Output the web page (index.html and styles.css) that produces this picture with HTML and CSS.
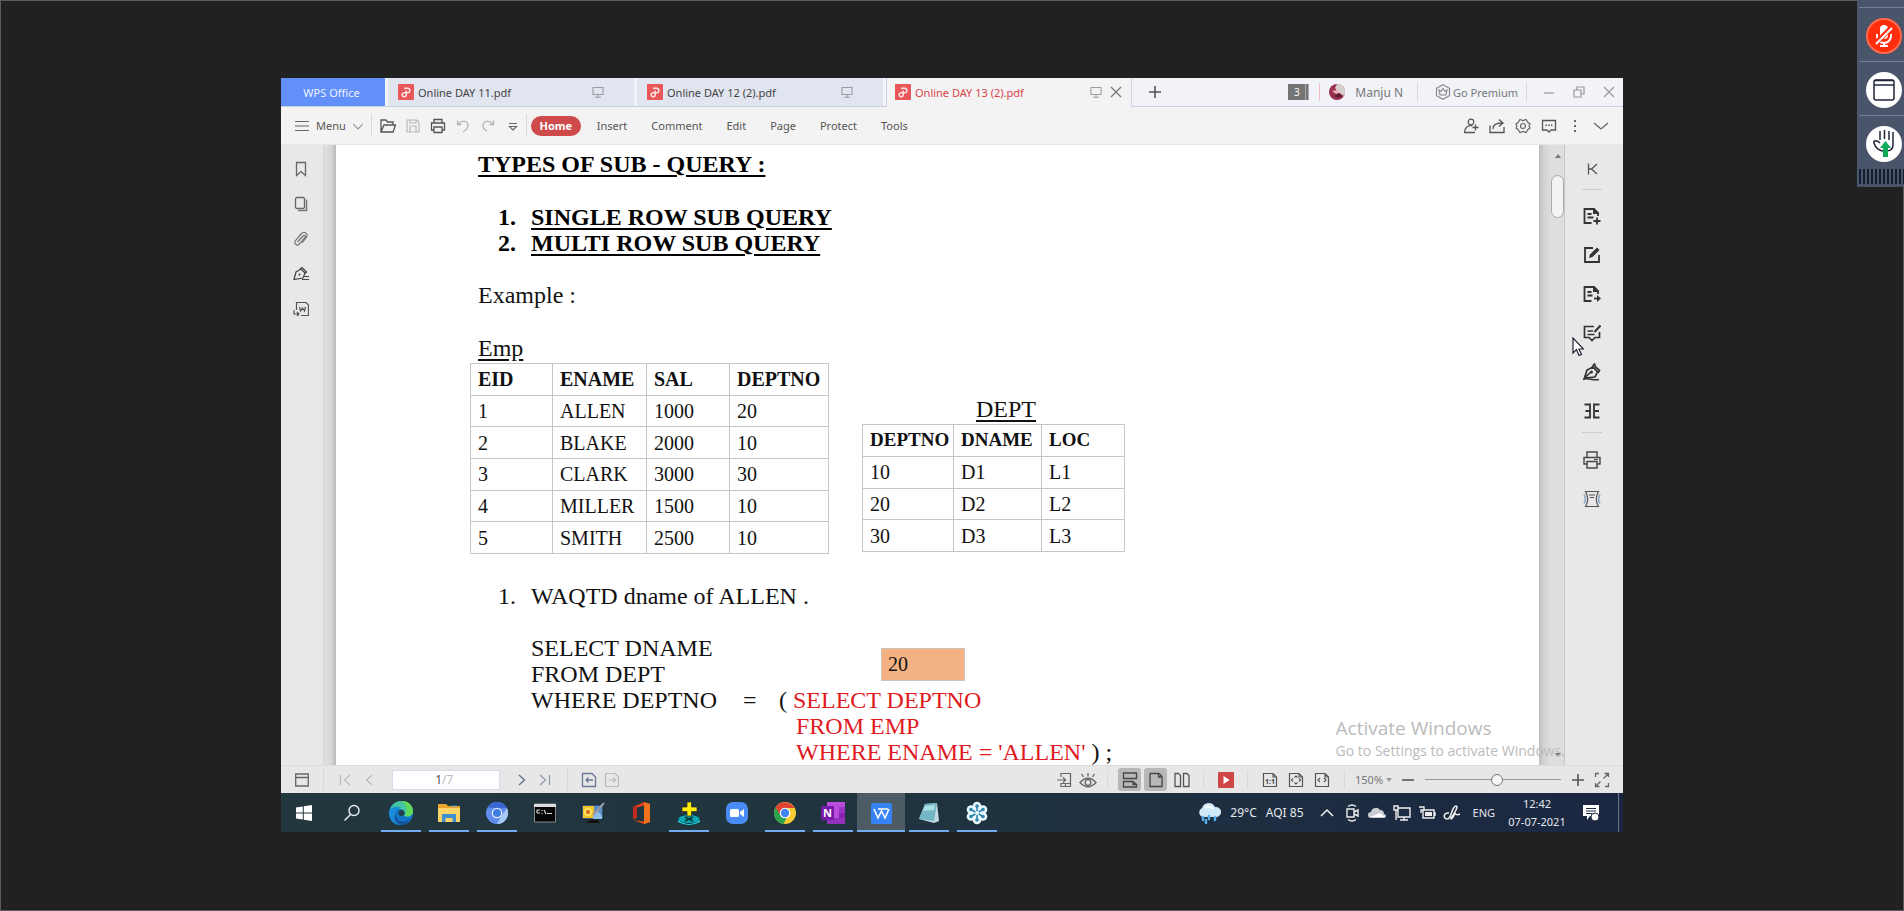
FILE: index.html
```html
<!DOCTYPE html>
<html lang="en">
<head>
<meta charset="utf-8">
<title>Online DAY 13 (2).pdf - WPS Office</title>
<link rel="stylesheet" href="styles.css">
</head>
<body>
<svg class="defs" aria-hidden="true">
  <defs>
    <symbol id="pdf" viewBox="0 0 16 16"><rect width="16" height="16" rx="1" fill="#e8575a"/><path d="M6 4.200h3.600a2.200 2.200 0 0 1 0 4.600H6.200a2 2 0 1 0 2 2V6.500" fill="none" stroke="#ffe3e2" stroke-width="1.500"/></symbol>
    <symbol id="monitor" viewBox="0 0 12 12"><path d="M1 1.500h10v7H1zM6 8.500v2.500M3 11.300h6" fill="none" stroke="#9a9da3" stroke-width="1.100"/></symbol>
  </defs>
</svg>

<div class="desktop">
  <aside class="dock">
    <button class="dock-item" aria-label="Unmute">
      <svg viewBox="0 0 36 36"><circle cx="18" cy="18" r="17" fill="#ff2d0c" stroke="#ff6a4c" stroke-width="2"/><rect x="14" y="7" width="8" height="14" rx="4" fill="#fff"/><path d="M11 16v2a7 7 0 0 0 14 0v-2M18 25v3M14 28h8" fill="none" stroke="#fff" stroke-width="2"/><path d="M10 25 25 10" stroke="#ff2d0c" stroke-width="5"/><path d="M10 26 26 10" stroke="#fff" stroke-width="2"/></svg>
    </button>
    <button class="dock-item" aria-label="Window">
      <svg viewBox="0 0 36 36"><circle cx="18" cy="18" r="18" fill="#fff"/><rect x="8" y="8" width="20" height="20" rx="2" fill="none" stroke="#20253a" stroke-width="1.500"/><path d="M8 13h20M9 8.500h18" stroke="#20253a" stroke-width="1.500"/></svg>
    </button>
    <button class="dock-item" aria-label="Raise hand">
      <svg viewBox="0 0 36 36"><circle cx="18" cy="18" r="18" fill="#fff"/><path d="M14 14V5M18.500 13V4M23 14V5M27 6v13c0 4-3 6-7 6-7 1-11-4-12-8-1-3 3-3 6 0" fill="none" stroke="#20253a" stroke-width="1.500"/><path d="m19.500 15 5.500 7h-3v9h-5v-9h-3z" fill="#0fa958"/></svg>
    </button>
    <div class="dock-grip"></div>
  </aside>

  <main class="window">
    <header class="tabbar">
      <button class="home-tab">WPS Office</button>
      <button class="tab"><svg class="i16"><use href="#pdf"/></svg><span>Online DAY 11.pdf</span><svg class="i12"><use href="#monitor"/></svg></button>
      <button class="tab"><svg class="i16"><use href="#pdf"/></svg><span>Online DAY 12 (2).pdf</span><svg class="i12"><use href="#monitor"/></svg></button>
      <div class="tab tab-active"><svg class="i16"><use href="#pdf"/></svg><span>Online DAY 13 (2).pdf</span><svg class="i12"><use href="#monitor"/></svg><button class="tab-close" aria-label="Close tab"><svg class="i12" viewBox="0 0 12 12"><path d="m1 1 10 10M11 1 1 11" stroke="#777" stroke-width="1.300"/></svg></button></div>
      <button class="plain new-tab" aria-label="New tab"><svg class="i12" viewBox="0 0 12 12"><path d="M6 0v12M0 6h12" stroke="#555" stroke-width="1.600"/></svg></button>
      <div class="account">
        <span class="count">3</span>
        <span class="rule rule-pink"></span>
        <button class="user"><svg class="i16" viewBox="0 0 16 16"><circle cx="8" cy="8" r="8" fill="#9c3050"/><path d="M8 0a8 8 0 0 1 7 12L9 8 6 4z" fill="#d8d0cc"/><path d="m3 7 5-1 3 3-4 1z" fill="#f0b0bc"/><path d="M5 12q5 3 8 0l-3-3z" fill="#5b2030"/></svg>Manju N</button>
        <span class="rule"></span>
        <button class="premium"><svg class="i16" viewBox="0 0 16 16"><path d="M8 .8 14.500 4.300v7.400L8 15.200 1.500 11.700V4.300z" fill="none" stroke="#888" stroke-width="1.200"/><path d="m4 6 2 1.500L8 4.500l2 3L12 6l-1 5H5z" fill="none" stroke="#888" stroke-width="1.100"/></svg>Go Premium</button>
        <span class="rule"></span>
        <div class="winbtns">
          <button class="plain" aria-label="Minimize"><svg class="i12" viewBox="0 0 12 12"><path d="M1 7h10" stroke="#999" stroke-width="1.200"/></svg></button>
          <button class="plain" aria-label="Restore"><svg class="i12" viewBox="0 0 12 12"><path d="M1 4h7v7H1zM4 4V1h7v7H8" fill="none" stroke="#999" stroke-width="1.200"/></svg></button>
          <button class="plain" aria-label="Close"><svg class="i12" viewBox="0 0 12 12"><path d="m1 1 10 10M11 1 1 11" stroke="#999" stroke-width="1.200"/></svg></button>
        </div>
      </div>
    </header>

    <nav class="toolbar">
      <button class="plain menu"><svg viewBox="0 0 14 14" class="i14"><path d="M0 2.500h14M0 7h14M0 11.500h14" stroke="#666" stroke-width="1.200"/></svg>Menu<svg viewBox="0 0 10 10" class="i10"><path d="m0 3 5 5 5-5" fill="none" stroke="#999" stroke-width="1.100"/></svg></button>
      <span class="rule"></span>
      <div class="quick">
        <button class="plain" aria-label="Open"><svg class="i16" viewBox="0 0 16 16"><path d="M1 14V2h5l1.500 2H13v3M1 14 4 7h11.500L13 14z" fill="none" stroke="#555" stroke-width="1.300"/></svg></button>
        <button class="plain" aria-label="Save"><svg class="i16" viewBox="0 0 16 16"><path d="M2 2h10l2 2v10H2zM5 2v3h6V2M5 14V8h6v6" fill="none" stroke="#b9b9b9" stroke-width="1.200"/></svg></button>
        <button class="plain" aria-label="Print"><svg class="i16" viewBox="0 0 16 16"><path d="M4 5V1.500h8V5M4 12H1.500V5h13v7H12M4 9h8v5.500H4z" fill="none" stroke="#555" stroke-width="1.300"/></svg></button>
        <button class="plain" aria-label="Undo"><svg class="i16" viewBox="0 0 16 16"><path d="M2.500 2.500v4h4M3 6c3-4 10-3.500 10 1.500 0 3-2 4.500-5 6.500" fill="none" stroke="#b5b5b5" stroke-width="1.300"/></svg></button>
        <button class="plain" aria-label="Redo"><svg class="i16" viewBox="0 0 16 16"><path d="M13.500 2.500v4h-4M13 6C10 2 3 2.500 3 7.500c0 3 2 4.500 4 5.500" fill="none" stroke="#b5b5b5" stroke-width="1.300"/></svg></button>
        <button class="plain" aria-label="More"><svg class="i16" viewBox="0 0 16 16"><path d="M4 5.500h8M4.500 8.500l3.500 3.500 3.500-3.500z" fill="none" stroke="#666" stroke-width="1.200"/></svg></button>
      </div>
      <span class="rule"></span>
      <div class="ribbon">
        <button class="pill">Home</button>
        <button class="plain">Insert</button>
        <button class="plain">Comment</button>
        <button class="plain">Edit</button>
        <button class="plain">Page</button>
        <button class="plain">Protect</button>
        <button class="plain">Tools</button>
      </div>
      <div class="actions">
        <button class="plain" aria-label="Collaborate"><svg class="i16" viewBox="0 0 16 16"><circle cx="8" cy="4" r="2.800" fill="none" stroke="#555" stroke-width="1.200"/><path d="M9.500 8C5 6.500 1.500 10 1.500 14.500H12M12.500 6.500v6M9.500 9.500h6" fill="none" stroke="#555" stroke-width="1.300"/></svg></button>
        <button class="plain" aria-label="Share"><svg class="i16" viewBox="0 0 16 16"><path d="M1 7.500v7h14V9M4 11c0-4.500 3-6 9-6M10 1.500l4 3.500-4 3.500" fill="none" stroke="#555" stroke-width="1.300"/></svg></button>
        <button class="plain" aria-label="Settings"><svg class="i16" viewBox="0 0 16 16"><path d="m5 1.500 3 1 3-1 2 3 2 1.500-1 2 1 2-2 1.500-2 3-3-1-3 1-2-3L1 10l1-2-1-2 2-1.500z" fill="none" stroke="#666" stroke-width="1.200"/><circle cx="8" cy="8" r="2.500" fill="none" stroke="#666" stroke-width="1.200"/></svg></button>
        <button class="plain" aria-label="Comments"><svg class="i16" viewBox="0 0 16 16"><path d="M1.500 2.500h13v9.500H10l-2 2-2-2H1.500z" fill="none" stroke="#555" stroke-width="1.300"/><path d="M4.500 7.200h7" stroke="#555" stroke-width="1.500" stroke-dasharray="1.500 1.200"/></svg></button>
        <button class="plain" aria-label="More options"><svg class="i16" viewBox="0 0 16 16"><path d="M8 2v2M8 7v2M8 12v2" stroke="#666" stroke-width="2"/></svg></button>
        <button class="plain" aria-label="Collapse"><svg class="i16" viewBox="0 0 16 16"><path d="m1 5 7 6 7-6" fill="none" stroke="#666" stroke-width="1.300"/></svg></button>
      </div>
    </nav>

    <div class="work">
      <aside class="side-left">
        <button class="plain" aria-label="Bookmarks"><svg class="i16" viewBox="0 0 16 16"><path d="M3.500 1.500h9v13L8 10.500l-4.500 4z" fill="none" stroke="#666" stroke-width="1.300"/></svg></button>
        <button class="plain" aria-label="Thumbnails"><svg class="i16" viewBox="0 0 16 16"><rect x="2.500" y="1.500" width="9" height="11" rx="1.500" fill="none" stroke="#666" stroke-width="1.300"/><path d="M13.500 3.500v11H5" fill="none" stroke="#777" stroke-width="1.500"/></svg></button>
        <button class="plain" aria-label="Attachments"><svg class="i16" viewBox="0 0 16 16"><path d="m4.500 11 5.500-6c1.500-1.500 3 0 2 1.500L6.500 13c-2.500 2.500-6-.5-4-3.500L8 3c3-3.500 8-.5 5 4l-4 5" fill="none" stroke="#777" stroke-width="1.200"/></svg></button>
        <button class="plain" aria-label="Signatures"><svg class="i16" viewBox="0 0 16 16"><path d="M1 13.500 3 6l5-3 4 4-2 5zM7 3l2-1.500L13.500 6 12 7.500" fill="none" stroke="#444" stroke-width="1.200"/><circle cx="6.500" cy="8.500" r="1" fill="#444"/><path d="M11 10.500h5M9 13.500h7" stroke="#444" stroke-width="1.200"/></svg></button>
        <button class="plain" aria-label="Convert"><svg class="i16" viewBox="0 0 16 16"><path d="M3.500 9V1.500H13l2.500 2.500v10.500H8M1 9v4h5M4 11l2 2-2 2" fill="none" stroke="#555" stroke-width="1.200"/><path d="m6.500 6 1 4L9.500 7l2 3 1-4" fill="none" stroke="#555" stroke-width="1.200"/></svg></button>
      </aside>
      <div class="gutter gutter-left"></div>

      <article class="doc">
        <h1 class="bold-line">TYPES OF SUB - QUERY :</h1>
        <ol class="kinds">
          <li><u>SINGLE ROW SUB QUERY</u></li>
          <li><u>MULTI ROW SUB QUERY</u></li>
        </ol>
        <p>Example :</p>
        <div class="tables">
          <section>
            <h2>Emp</h2>
            <table class="emp">
              <tr><th>EID</th><th>ENAME</th><th>SAL</th><th>DEPTNO</th></tr>
              <tr><td>1</td><td>ALLEN</td><td>1000</td><td>20</td></tr>
              <tr><td>2</td><td>BLAKE</td><td>2000</td><td>10</td></tr>
              <tr><td>3</td><td>CLARK</td><td>3000</td><td>30</td></tr>
              <tr><td>4</td><td>MILLER</td><td>1500</td><td>10</td></tr>
              <tr><td>5</td><td>SMITH</td><td>2500</td><td>10</td></tr>
            </table>
          </section>
          <section class="dept-block">
            <h2>DEPT</h2>
            <table class="dept">
              <tr><th>DEPTNO</th><th>DNAME</th><th>LOC</th></tr>
              <tr><td>10</td><td>D1</td><td>L1</td></tr>
              <tr><td>20</td><td>D2</td><td>L2</td></tr>
              <tr><td>30</td><td>D3</td><td>L3</td></tr>
            </table>
          </section>
        </div>
        <ol class="questions"><li>WAQTD dname of ALLEN .</li></ol>
        <div class="query">
          <div class="outer">SELECT DNAME<br>FROM DEPT<br>WHERE DEPTNO</div>
          <div class="equals">=</div>
          <div class="inner">
            <div class="result">20</div>
            <div>( <span class="red">SELECT DEPTNO</span></div>
            <div class="indent red">FROM EMP</div>
            <div class="indent"><span class="red">WHERE ENAME = 'ALLEN'</span> ) ;</div>
          </div>
        </div>
      </article>

      <div class="gutter gutter-right"></div>
      <div class="scroll">
        <svg class="arrow" viewBox="0 0 6 4"><path d="M0 4 3 0l3 4z" fill="#777"/></svg>
        <div class="thumb"></div>
        <svg class="arrow arrow-down" viewBox="0 0 6 4"><path d="m0 0 3 4 3-4z" fill="#777"/></svg>
      </div>
      <aside class="side-right">
        <button class="plain" aria-label="Expand panel"><svg class="i16" viewBox="0 0 16 16"><path d="M4.500 2.500v11M13 3 7.500 8l5.500 5M5 8h3" fill="none" stroke="#555" stroke-width="1.300"/></svg></button>
        <hr>
        <button class="plain" aria-label="Insert page"><svg class="i18" viewBox="0 0 18 18"><path d="M8.500 16H1.500V2H11l4 4v3M4.500 7h4M4.500 10.500h6" fill="none" stroke="#333" stroke-width="1.800"/><path d="M10 1h1l5 5v1h-6z" fill="#333"/><path d="M14 10.500v7M10.500 14h7" stroke="#333" stroke-width="1.800"/></svg></button>
        <button class="plain" aria-label="Edit"><svg class="i18" viewBox="0 0 18 18"><path d="M10 2H2v14h14V9" fill="none" stroke="#333" stroke-width="1.800"/><path d="m6 12 1-3.500L14 1.500 16.500 4 9.500 11z" fill="#333"/></svg></button>
        <button class="plain" aria-label="Export"><svg class="i18" viewBox="0 0 18 18"><path d="M8.500 16H1.500V2H11l4 4v3M4.500 7h4M4.500 10.500h5" fill="none" stroke="#333" stroke-width="1.800"/><path d="M10 1h1l5 5v1h-6z" fill="#333"/><path d="M11 13.500h4" stroke="#333" stroke-width="1.800"/><path d="m14 10 4 3.500-4 3.500z" fill="#333"/></svg></button>
        <button class="plain" aria-label="Annotate"><svg class="i18" viewBox="0 0 18 18"><path d="M11 2.500H1.500v11H6l3 3 3-3h4.500V8M4.500 7H10M4.500 10.500h7" fill="none" stroke="#333" stroke-width="1.700"/><path d="m11.500 8 6-6.500" stroke="#333" stroke-width="2"/></svg></button>
        <button class="plain" aria-label="Sign"><svg class="i18" viewBox="0 0 18 18"><path d="M1.500 15 4 7l6-3 4.500 5L12 14zM9 4l2.500-3 1 3 4 3.500L15 10M1.500 15 8 9" fill="none" stroke="#333" stroke-width="1.700"/><circle cx="8.500" cy="9" r="1.500" fill="#333"/><path d="M0 16.500c5-2.500 9 1.500 16 0" fill="none" stroke="#333" stroke-width="1.500"/></svg></button>
        <button class="plain" aria-label="Compare"><svg class="i18" viewBox="0 0 18 18"><path d="M1.500 2.500H7v13H1.500M2.500 9H7M16.500 2.500H11v13h5.500M16 9h-5" fill="none" stroke="#333" stroke-width="1.800"/></svg></button>
        <hr>
        <button class="plain" aria-label="Print"><svg class="i18" viewBox="0 0 18 18"><path d="M4 6V1h10v5M4 13H1V6.500h16V13h-3M4 10.500h10V17H4z" fill="none" stroke="#444" stroke-width="1.400"/><path d="M11 8.500h4" stroke="#444"/></svg></button>
        <button class="plain" aria-label="Compress"><svg class="i18" viewBox="0 0 18 18"><path d="M2.500 1.500h13q-4.500 7.500 0 15h-13q4.500-7.500 0-15zM6 5h6M7 7.500h4" fill="none" stroke="#555" stroke-width="1.200"/><path d="M1 4.500q3 4.500 0 9M17 4.500q-3 4.500 0 9" fill="none" stroke="#92a9cc" stroke-width="1.800"/></svg></button>
      </aside>
      <div class="watermark"><div class="wm-title">Activate Windows</div><div>Go to Settings to activate Windows.</div></div>
      <svg class="cursor" viewBox="0 0 12 20"><path d="M1 1v15l3.500-3.500 2.500 6 2.500-1L7 12h4.500z" fill="#fff" stroke="#223" stroke-width="1.200"/></svg>
    </div>

    <footer class="status">
      <button class="plain st-nav" aria-label="Toggle panel"><svg class="i14" viewBox="0 0 14 14"><path d="M.7 1h12.600v12H.7zM.7 4.500h12.600" fill="none" stroke="#666" stroke-width="1.300"/></svg></button>
      <span class="rule"></span>
      <div class="pager">
        <button class="plain" aria-label="First page"><svg class="i12" viewBox="0 0 12 12"><path d="M1.500 1v10M11 1 5.500 6l5.500 5" fill="none" stroke="#bbb" stroke-width="1.200"/></svg></button>
        <button class="plain" aria-label="Previous page"><svg class="i12" viewBox="0 0 12 12"><path d="M9 1 3.500 6 9 11" fill="none" stroke="#bbb" stroke-width="1.200"/></svg></button>
        <label class="pagebox"><input type="text" value="1" aria-label="Page number"><span>/7</span></label>
        <button class="plain" aria-label="Next page"><svg class="i12" viewBox="0 0 12 12"><path d="M3 1l5.500 5L3 11" fill="none" stroke="#66708a" stroke-width="1.400"/></svg></button>
        <button class="plain" aria-label="Last page"><svg class="i12" viewBox="0 0 12 12"><path d="M10.500 1v10M1 1l5.500 5L1 11" fill="none" stroke="#8f97a8" stroke-width="1.200"/></svg></button>
      </div>
      <span class="rule"></span>
      <div class="history">
        <button class="plain" aria-label="Back"><svg class="i16" viewBox="0 0 16 16"><path d="M1.500 1.500H11l3.500 3.500v9.500h-13zM12 8H5M7.500 5.500 5 8l2.500 2.500" fill="none" stroke="#6a7894" stroke-width="1.300"/></svg></button>
        <button class="plain" aria-label="Forward"><svg class="i16" viewBox="0 0 16 16"><path d="M1.500 1.500H11l3.500 3.500v9.500h-13zM4.500 8h7M9 5.500 11.500 8 9 10.500" fill="none" stroke="#bbb" stroke-width="1.200"/></svg></button>
      </div>
      <div class="views">
        <button class="plain" aria-label="Mobile view"><svg class="i16" viewBox="0 0 16 16"><path d="M5 5V1.500h9.500v13H5V11M5 11.500h9.500M1 8h8M7 5.500 9.500 8 7 10.500M9.500 11.500v3" fill="none" stroke="#666" stroke-width="1.200"/></svg></button>
        <button class="plain" aria-label="Eye protection"><svg class="i18" viewBox="0 0 18 18"><path d="M1 11.500q8-8.500 16 0-8 8.500-16 0zM9 5.500V2M4.500 6 2.500 3M13.500 6l2-3" fill="none" stroke="#666" stroke-width="1.300"/><circle cx="9" cy="11.500" r="2.800" fill="none" stroke="#666" stroke-width="1.300"/></svg></button>
        <span class="rule"></span>
        <div class="layouts">
          <button class="layout-on" aria-label="Continuous"><svg class="i16" viewBox="0 0 16 16"><path d="M1.500 1h13v5.500h-13zM1.500 15V9.500H11l3.500 3V15zM11 9.500v3h3.500" fill="none" stroke="#444" stroke-width="1.300"/></svg></button>
          <button class="layout-on" aria-label="Single page"><svg class="i16" viewBox="0 0 16 16"><path d="M2 1.500h9l3 3v10H2zM10.500 1.500V5H14" fill="none" stroke="#444" stroke-width="1.300"/></svg></button>
          <button class="plain" aria-label="Two pages"><svg class="i16" viewBox="0 0 16 16"><path d="M1 1.500h3.500l2 2v11H1zM9.500 1.500H13l2 2v11H9.500z" fill="none" stroke="#555" stroke-width="1.300"/></svg></button>
        </div>
        <span class="rule"></span>
        <button class="play" aria-label="Play"><svg class="i16" viewBox="0 0 16 16"><rect width="16" height="16" rx="1" fill="#cf4647"/><path d="m5.500 4 6 4-6 4z" fill="#fff"/></svg></button>
        <span class="rule"></span>
        <div class="fits">
          <button class="plain" aria-label="Actual size"><svg class="i16" viewBox="0 0 16 16"><path d="M1.500 1.500H11l3.500 3.500v9.500h-13zM11 1.500V5h3.500" fill="none" stroke="#555" stroke-width="1.200"/><text x="8" y="11.500" class="ratio">1:1</text></svg></button>
          <button class="plain" aria-label="Fit page"><svg class="i16" viewBox="0 0 16 16"><path d="M1.500 1.500H11l3.500 3.500v9.500h-13zM11 1.500V5h3.500M6.500 5.500 8 4l1.500 1.500M6.500 10.500 8 12l1.500-1.500M5 6.500 3.500 8 5 9.500M11 6.500 12.500 8 11 9.500" fill="none" stroke="#555" stroke-width="1.200"/></svg></button>
          <button class="plain" aria-label="Fit width"><svg class="i16" viewBox="0 0 16 16"><path d="M1.500 1.500H11l3.500 3.500v9.500h-13zM11 1.500V5h3.500M6 6 4 8l2 2M10 6l2 2-2 2" fill="none" stroke="#555" stroke-width="1.200"/></svg></button>
        </div>
        <span class="rule"></span>
        <div class="zoom">
          <select class="percent" aria-label="Zoom level"><option>150%</option></select>
          <svg class="caret" viewBox="0 0 6 4"><path d="m0 0 3 4 3-4z" fill="#999"/></svg>
          <button class="plain" aria-label="Zoom out"><svg class="i12" viewBox="0 0 12 12"><path d="M0 6h12" stroke="#555" stroke-width="1.600"/></svg></button>
          <input class="slider" type="range" min="0" max="100" value="53" aria-label="Zoom">
          <button class="plain" aria-label="Zoom in"><svg class="i12" viewBox="0 0 12 12"><path d="M0 6h12M6 0v12" stroke="#555" stroke-width="1.600"/></svg></button>
          <button class="plain" aria-label="Full screen"><svg class="i16" viewBox="0 0 16 16"><path d="M1.500 5V1.500H5M10.500 1.500h4V5M1.500 11v3.500h4M14.500 11v3.500H11M14 2l-4.500 4.500M2 14l4.500-4.500" fill="none" stroke="#666" stroke-width="1.300"/></svg></button>
        </div>
      </div>
    </footer>

    <nav class="taskbar">
      <button class="task start" aria-label="Start"><svg class="i18" viewBox="0 0 18 18"><path d="m1 3.500 6.800-1v6H1zM8.800 2.300 17 1v7.500H8.800zM1 9.500h6.800v6L1 14.500zM8.800 9.500H17V17l-8.200-1.300z" fill="#fff"/></svg></button>
      <button class="task search" aria-label="Search"><svg class="i18" viewBox="0 0 18 18"><circle cx="11" cy="6.500" r="5" fill="none" stroke="#e9eef0" stroke-width="1.400"/><path d="m7.500 10.500-6 6" stroke="#e9eef0" stroke-width="1.500"/></svg></button>
      <button class="task run" aria-label="Edge"><svg class="i24" viewBox="0 0 24 24"><circle cx="12" cy="12" r="12" fill="#1176c8"/><path d="M1 9C3 2 8 0 12 0c8 0 12 6 12 10 0 5-5 7-9 5 2-3 0-7-4-7-5 0-8 0-10 1z" fill="#43c5a0"/><path d="M13 0c7 0 11 5 11 10 0 4-4 6-8 5 1-3 4-9-3-15z" fill="#63d95c"/><path d="M0 12c0-5 7-8 12-5-4 0-6 4-4 8 2 5 8 6 13 3-3 5-8 6-10 6C5 24 0 19 0 12z" fill="#1b8bd8"/><path d="M8 11c-2 4 1 9 6 9 3 0 5-1 7-2-2 4-5 6-9 6-6-1-9-8-4-13z" fill="#12569f"/><circle cx="12.500" cy="12" r="3" fill="#24404d"/></svg></button>
      <button class="task run" aria-label="File Explorer"><svg class="i24" viewBox="0 0 24 24"><path d="M1 3h8l2 2h12v16H1z" fill="#eaa62b"/><path d="M1 7h22v14H1z" fill="#fbd468"/><path d="M5 21v-8h14v8h-3.500v-4h-7v4z" fill="#3e8fcf"/><path d="M14 5h6" stroke="#48a0d8"/></svg></button>
      <button class="task run" aria-label="Chromium"><svg class="i24" viewBox="0 0 24 24"><circle cx="12" cy="12" r="11" fill="#5e8cec"/><path d="M2.500 6.500A11 11 0 0 1 22 7H12z" fill="#3b65d0"/><path d="M22 7a11 11 0 0 1-10 16l5-9z" fill="#a8c8f8"/><circle cx="12" cy="12" r="5.300" fill="#e5efff"/><circle cx="12" cy="12" r="4" fill="#3f7ce0"/></svg></button>
      <button class="task" aria-label="Command Prompt"><svg class="i24" viewBox="0 0 24 24"><path d="M1.500 3h21v18h-21z" fill="#050505" stroke="#888"/><path d="M1 3h22v3H1z" fill="#ddd"/><path d="M4 9h3M4 12h3M4 9v3M9 9v1M9 12v1M11 9l2 4M14 12.500h5" fill="none" stroke="#ddd" stroke-width="1.200"/></svg></button>
      <button class="task" aria-label="Display tools"><svg class="i24" viewBox="0 0 24 24"><path d="M1 4h21v14H1z" fill="#5b8fc6" stroke="#17242e"/><path d="M2 5h11v12H2z" fill="#f3c52a"/><circle cx="7" cy="11" r="4" fill="#fbe45a"/><circle cx="7" cy="11" r="2" fill="#d9621f"/><path d="m12 15 5-5 4 5v3h-9z" fill="#8fbce8"/><path d="m12 14 11-12" stroke="#99a" stroke-width="2"/><path d="M5 22h14l-3-3H9z" fill="#111"/></svg></button>
      <button class="task" aria-label="Office"><svg class="i24" viewBox="0 0 24 24"><path d="m4 6 11-5 6 2v18l-6 2L4 19l11 1.500V4.500L8 6.500v10l-4 2z" fill="#e8431a"/><path d="m15 1 6 2v18l-6 2z" fill="#f2711d"/><path d="m4 6 4-2v12l-4 2z" fill="#c5281c"/></svg></button>
      <button class="task run" aria-label="Upload tool"><svg class="i24" viewBox="0 0 24 24"><ellipse cx="12" cy="18" rx="11" ry="4.500" fill="#10a7b4" stroke="#063c44"/><path d="M1 19q11 8 22 0v2q-11 6-22 0z" fill="#25d3dd"/><path d="M10 1h4.500v5H20v4.500h-5.500V15H10v-4.500H5V6h5z" fill="#ffee00" stroke="#333" stroke-width=".8"/><path d="m8 16 8 4M16 16l-8 4" stroke="#033" stroke-width="1.500"/></svg></button>
      <button class="task" aria-label="Zoom"><svg class="i24" viewBox="0 0 24 24"><rect x="1" y="1" width="22" height="22" rx="7" fill="#4a8cf7"/><rect x="5" y="8" width="9" height="8" rx="1.500" fill="#fff"/><path d="m15 11 4-3v8l-4-3z" fill="#fff"/></svg></button>
      <button class="task run" aria-label="Chrome"><svg class="i24" viewBox="0 0 24 24"><circle cx="12" cy="12" r="11" fill="#f8cc35"/><path d="M2.500 6.500A11 11 0 0 1 21.500 7H12l-5 8z" fill="#df4334"/><path d="M2.500 6.500 8 15l6 1-3.500 7A11 11 0 0 1 2.500 6.500z" fill="#2ba24c"/><circle cx="12" cy="12" r="5.300" fill="#fff"/><circle cx="12" cy="12" r="4.200" fill="#4284f0"/></svg></button>
      <button class="task run" aria-label="OneNote"><svg class="i24" viewBox="0 0 24 24"><path d="M6 1h18v22H6z" fill="#b94cdc"/><path d="M18 6h6v6h-6z" fill="#9d33c6"/><path d="M18 12h6v5h-6z" fill="#8423b0"/><path d="M6 17h18v6H6z" fill="#7b1fa8" opacity=".6"/><rect y="5" width="13" height="14" fill="#7719aa"/><text x="6.500" y="16" class="note">N</text></svg></button>
      <button class="task run active" aria-label="WPS Office"><svg class="i24" viewBox="0 0 24 24"><rect x="2" y="2" width="21" height="21" rx="2" fill="#3583f5"/><path d="m5 8 4 9 3.500-7 3.500 7 4-9M9 8h10" fill="none" stroke="#fff" stroke-width="1.600"/></svg></button>
      <button class="task run" aria-label="Notepad"><svg class="i24" viewBox="0 0 24 24"><path d="M8 3 20 2l2 18-5 2-15-4z" fill="#c3dbe0"/><path d="m8 3 12-1-3 18-15-2z" fill="#73b7c4"/><path d="m8 5 10-1-1 5-11 1z" fill="#abe0e4"/></svg></button>
      <button class="task run" aria-label="Meeting"><svg class="i24" viewBox="0 0 24 24"><g fill="#e9f7fc"><circle cx="12" cy="5" r="4.300"/><circle cx="18" cy="8.500" r="4.300"/><circle cx="18" cy="15.500" r="4.300"/><circle cx="12" cy="19" r="4.300"/><circle cx="6" cy="15.500" r="4.300"/><circle cx="6" cy="8.500" r="4.300"/><circle cx="12" cy="12" r="6"/></g><path d="M12 5v14M6 8.500l12 7M18 8.500l-12 7" stroke="#2e86a8" stroke-width="1.600"/><g fill="#2e86a8"><circle cx="12" cy="5" r="1.800"/><circle cx="18" cy="8.500" r="1.800"/><circle cx="18" cy="15.500" r="1.800"/><circle cx="12" cy="19" r="1.800"/><circle cx="6" cy="15.500" r="1.800"/><circle cx="6" cy="8.500" r="1.800"/></g><circle cx="12" cy="12" r="2" fill="#e9f7fc"/></svg></button>

      <div class="tray">
        <button class="weather"><svg class="i24" viewBox="0 0 24 24"><path d="M5 16a5 5 0 0 1 0-9 7 7 0 0 1 13-1 5 5 0 0 1 2 10z" fill="#cfe9f8"/><path d="M8 7a5 5 0 0 1 8 1" fill="none" stroke="#fff" stroke-width="2"/><path d="M6 16v3M12 15v3M18 16v3M9 19v3" stroke="#58b0e8" stroke-width="2.500" stroke-linecap="round"/></svg><span>29°C</span><span>AQI 85</span></button>
        <div class="tray-icons">
          <svg class="i18" viewBox="0 0 18 18"><path d="m3 12 6-6 6 6" fill="none" stroke="#eee" stroke-width="1.500"/></svg>
          <svg class="i18" viewBox="0 0 18 18"><path d="M4 5h7v8H4zM11 8l4-2v6l-4-2M5 2.500q4-3 8 0M5 15.500q4 3 8 0" fill="none" stroke="#eee" stroke-width="1.400"/></svg>
          <svg class="i18" viewBox="0 0 18 18"><path d="M3 14a3 3 0 0 1 0-6 5 5 0 0 1 9-2 4 4 0 0 1 4 4 2 2 0 0 1 0 4z" fill="#c9cdd2"/><path d="m2 13 10-4 5 4z" fill="#fff"/></svg>
          <svg class="i18" viewBox="0 0 18 18"><path d="M5 4h12v9H5zM11 13v3M7 16h8M1 2h4v4H1zM3 6v10" fill="none" stroke="#eee" stroke-width="1.400"/></svg>
          <svg class="i18" viewBox="0 0 18 18"><path d="M5 6h11v8H5zM17 8v4M1 3h5v3H3v3" fill="none" stroke="#eee" stroke-width="1.400"/><path d="M7 8h7v4H7z" fill="#eee"/></svg>
          <svg class="i18" viewBox="0 0 18 18"><path d="M6 9c-6-1-6 6-2 6 5 0 4-12 9-13 3 0-2 8-5 12-1 2 2 1 4-5 0 0 1 3 5 1" fill="none" stroke="#eee" stroke-width="1.500"/></svg>
        </div>
        <span class="lang">ENG</span>
        <time class="clock">12:42<br>07-07-2021</time>
        <button class="notice" aria-label="Notifications"><svg class="i18" viewBox="0 0 18 18"><path d="M1 1h16v11H8l-3 4v-4H1z" fill="#fff"/><path d="M4 4.500h10M4 7h10M4 9.500h6" stroke="#1c2b43"/><circle cx="13" cy="13" r="4" fill="#fff" stroke="#1c2b43"/></svg></button>
      </div>
    </nav>
  </main>
</div>
</body>
</html>
```

FILE: styles.css
```css
* { box-sizing: border-box; }
body { margin: 0; background: #212121; font-family: "Noto Sans", "Open Sans", sans-serif; font-size: 12px; color: #555; }
button { font: inherit; color: inherit; border: 0; background: none; padding: 0; margin: 0; }
svg { display: block; flex: none; }
.defs { position: absolute; width: 0; height: 0; }
.i10 { width: 10px; height: 10px; }
.i12 { width: 12px; height: 12px; }
.i14 { width: 14px; height: 14px; }
.i16 { width: 16px; height: 16px; }
.i18 { width: 18px; height: 18px; }
.i24 { width: 24px; height: 24px; }
.plain { display: flex; align-items: center; justify-content: center; }
.rule { width: 1px; align-self: stretch; background: #d9d9dc; flex: none; }

.desktop { display: flex; height: 100vh; padding: 77px 280px 78px; border: 1px solid #5b5b5b; position: relative; }
.window { flex: 1; min-width: 0; display: flex; flex-direction: column; background: #f3f3f3; overflow: hidden; }

/* Floating meeting controls at the screen corner */
.dock { position: absolute; top: -1px; right: -1px; width: 47px; padding: 7px 0 3px 2px; background: #4a546a; }
.dock-item { display: block; width: 100%; height: 54px; padding: 10px 0 7px 7px; border-top: 1px solid #718096; }
.dock-item svg { width: 36px; height: 36px; }
.dock-grip { height: 15px; background: repeating-linear-gradient(90deg, #151e30 0 2px, #4a546a 2px 4px); }

/* Tabs */
.tabbar { display: flex; flex: none; height: 29px; background: #f1f3f8; border-bottom: 1px solid #c9d1e1; }
.home-tab { width: 104px; padding-right: 3px; background: #6190fb; color: #eef3ff; font-size: 11px; }
.tab { display: flex; align-items: center; width: 246px; margin-left: 3px; padding: 0 30px 0 10px; background: #e1e5ef; color: #444; text-align: left; }
.tab + .tab { margin-left: 3px; }
.tab span { flex: 1; padding-left: 4px; white-space: nowrap; font-size: 11px; }
.tab-active { height: 29px; background: #f3f3f3; color: #d9434b; padding: 0 9px 1px 8px; border: solid #cdd3e2; border-width: 0 1px; }
.tab-close { margin-left: 8px; }
.new-tab { width: 46px; }
.account { margin-left: auto; display: flex; align-items: center; font-size: 12px; color: #777; }
.account .rule { margin: 5px 0; }
.account .rule-pink { background: #f1bcc6; }
.count { width: 21px; height: 16px; margin-right: 10px; background: #757575; border-right: 4px double #aaa; color: #fff; font-size: 10px; line-height: 16px; text-align: center; }
.user { display: flex; align-items: center; gap: 10px; padding: 0 14px 0 9px; }
.premium { display: flex; align-items: center; gap: 2px; padding: 0 8px 0 17px; font-size: 11px; }
.winbtns { display: flex; gap: 18px; padding: 0 8px 0 16px; }

/* Toolbar */
.toolbar { display: flex; flex: none; align-items: center; height: 38px; background: #f3f3f3; border-bottom: 1px solid #e6e6e6; font-size: 11px; }
.toolbar .rule { margin: 7px 0; }
.menu { gap: 7px; padding: 0 8px 0 14px; }
.quick { display: flex; gap: 9px; padding: 0 5px 0 8px; }
.ribbon { display: flex; align-items: center; gap: 24px; padding-left: 4px; }
.pill { height: 20px; width: 50px; margin-right: -8px; border-radius: 10px; background: #cf4a4b; color: #fff; font-weight: 700; }
.actions { display: flex; gap: 10px; margin-left: auto; padding-right: 14px; }

/* Work area */
.work { flex: 1; min-height: 0; display: flex; position: relative; background: #e8e8e8; overflow: hidden; }
.side-left { width: 43px; padding: 16px 2px 0 0; display: flex; flex-direction: column; align-items: center; gap: 19px; border-right: 1px solid #d3d3dc; }
.gutter { width: 12px; flex: none; }
.gutter-left { background: linear-gradient(90deg, #e0e0e0, #d6d6d6 60%, #b9b9b9); }
.gutter-right { background: linear-gradient(90deg, #bdbdbd, #d2d2d2 40%, #dedede); }
.scroll { width: 13px; flex: none; background: #dedede; display: flex; flex-direction: column; align-items: center; padding: 9px 0 8px; }
.arrow { width: 6px; height: 4px; }
.thumb { width: 13px; height: 43px; margin-top: 17px; border: 1px solid #aaa; border-radius: 7px; background: #f3f3f3; }
.arrow-down { margin-top: auto; }
.side-right { width: 59px; flex: none; padding: 16px 4px 0 0; border-left: 1px solid #c8c8c8; display: flex; flex-direction: column; align-items: center; gap: 21px; }
.side-right hr { width: 20px; height: 1px; margin: -9px 0 -5px; border: 0; background: #ccc; }
.side-right hr ~ hr { margin-bottom: -4px; }
.side-right hr + button { margin-top: 1px; }
.watermark { position: absolute; right: 58px; bottom: 4px; font-family: "Open Sans", "Noto Sans", sans-serif; font-size: 14px; line-height: 20px; color: #bbb; white-space: nowrap; }
.wm-title { font-size: 19px; line-height: 26px; }
.cursor { position: absolute; right: 39px; top: 192px; width: 12px; height: 20px; }

/* Document page */
.doc { flex: 1; min-width: 0; overflow: hidden; padding: 6px 0 0 142px; background: #fff; color: #111; font-family: "Liberation Serif", "Times New Roman", serif; font-size: 24px; line-height: 26px; }
.doc h1, .doc h2, .doc p, .doc ol { margin: 0; font-size: 24px; }
.bold-line { text-decoration: underline; text-underline-offset: 3px; color: #000; }
.doc ol { padding-left: 20px; list-style: none; counter-reset: item; }
.doc li { counter-increment: item; }
.doc li::before { content: counter(item) "."; display: inline-block; width: 33px; }
.doc .kinds { padding-top: 27px; padding-bottom: 26px; font-weight: 700; color: #000; }
.kinds u { text-underline-offset: 3px; }
.doc h2 { font-weight: 400; text-decoration: underline; text-underline-offset: 3px; }
.tables { display: flex; align-items: flex-start; padding-top: 27px; margin-left: -8px; }
.tables h2 { padding-left: 8px; margin-bottom: 2px; }
table { border-collapse: collapse; table-layout: fixed; font-size: 20px; line-height: 24px; }
th, td { border: 1px solid #c6c6c6; padding: 0 7px; text-align: left; }
.emp { width: 359px; height: 191px; }
.emp th:nth-child(1) { width: 82px; }
.emp th:nth-child(2) { width: 94px; }
.emp th:nth-child(3) { width: 83px; }
.dept-block { padding-top: 61px; margin-left: 33px; }
.dept-block h2 { padding-left: 114px; }
.dept { width: 263px; height: 128px; }
.dept th { font-size: 19px; }
.dept th:nth-child(1) { width: 91px; }
.dept th:nth-child(2) { width: 88px; }
.doc .questions { padding-top: 29px; }
.query { display: grid; grid-template-columns: 212px 36px 1fr; padding: 26px 0 0 53px; }
.equals { align-self: start; padding-top: 52px; }
.result { width: 84px; height: 33px; margin: 13px 0 6px 102px; padding-left: 6px; border: 1px solid #cfc4bc; background: #f4b183; font-size: 20px; line-height: 31px; }
.indent { padding-left: 17px; }
.red { color: #e01a1f; }

/* Status bar */
.status { display: flex; flex: none; align-items: center; height: 28px; background: #e7e7e7; border-top: 1px solid #dcdcdc; }
.status .rule { margin: 2px 0; }
.st-nav { width: 42px; }
.pager { display: flex; align-items: center; padding: 0 16px 0 15px; }
.pager button { margin-right: 12px; }
.pager button:last-child { margin-right: 0; }
.pagebox { display: flex; width: 108px; height: 20px; margin: 0 16px 0 5px; border: 1px solid #d5dcec; background: #fff; align-items: center; }
.pager .pagebox + button { margin-right: 11px; }
.pagebox input { width: 49px; padding: 0; border: 0; background: none; text-align: right; font: inherit; color: #555; }
.pagebox span { color: #bbb; }
.history { display: flex; gap: 7px; padding-left: 13px; }
.views { display: flex; align-items: center; margin-left: auto; gap: 7px; }
.views .rule { margin: 2px 3px; }
.layouts { display: flex; gap: 3px; }
.layouts button { display: flex; align-items: center; justify-content: center; width: 23px; height: 23px; border-radius: 3px; }
.layout-on { background: #b8b8b8; }
.play { margin: 0 3px 0 4px; }
.fits { display: flex; gap: 10px; padding: 0 4px; }
.ratio { font-size: 7px; font-weight: 700; text-anchor: middle; fill: #444; }
.zoom { display: flex; align-items: center; padding-right: 13px; font-size: 11px; }
.percent { appearance: none; width: 30px; border: 0; padding: 0; background: none; font: inherit; color: #777; }
.caret { width: 6px; height: 4px; margin: 0 10px 0 1px; }
.slider { appearance: none; width: 136px; height: 14px; margin: 0 11px; background: linear-gradient(#999, #999) center / 100% 1px no-repeat; }
.slider::-webkit-slider-thumb { appearance: none; width: 12px; height: 12px; border: 1px solid #777; border-radius: 50%; background: #f5f5f5; }
.slider + button { margin-right: 10px; }

/* Taskbar */
.taskbar { display: flex; flex: none; height: 39px; background: linear-gradient(90deg, #22373e 0%, #20343f 45%, #1b2742 100%); color: #e4e8ec; }
.task { display: flex; align-items: center; justify-content: center; width: 48px; flex: none; }
.start { width: 46px; }
.search { width: 50px; }
.run { background: linear-gradient(#72acec, #72acec) center bottom / 40px 2px no-repeat; }
.active { background-color: #4c5b64; background-size: 48px 2px; }
.note { font-size: 11px; font-weight: 700; text-anchor: middle; fill: #fff; }
.tray { display: flex; align-items: center; margin-left: auto; height: 39px; border-right: 1px solid #6b7588; margin-right: 4px; }
.weather { display: flex; align-items: center; gap: 9px; margin-right: 14px; }
.tray-icons { display: flex; gap: 7px; margin-right: 12px; }
.lang { margin-right: 13px; font-size: 11px; }
.clock { width: 58px; font-size: 11px; line-height: 18px; text-align: center; white-space: nowrap; }
.notice { margin: 0 18px 0 16px; }
```
